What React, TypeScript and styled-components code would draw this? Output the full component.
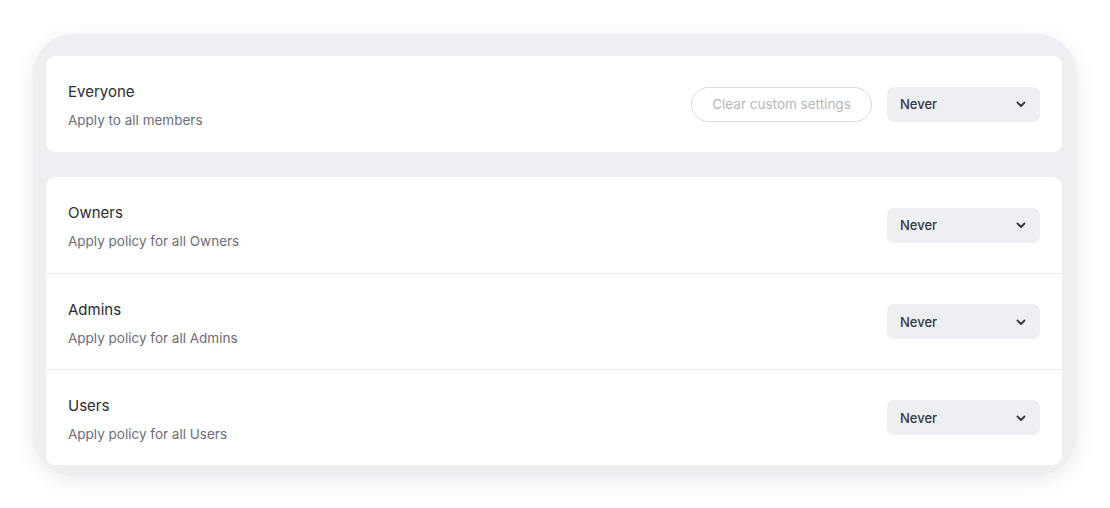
import React from "react";
import styled, { createGlobalStyle } from "styled-components";

const GlobalStyle = createGlobalStyle`
  html, body { margin: 0; padding: 0; background: #ffffff; }
  body { font-family: Inter, "Noto Sans", "Liberation Sans", sans-serif; -webkit-font-smoothing: antialiased; }
  * { box-sizing: border-box; }
`;

const Page = styled.div`
  width: 1110px;
  height: 508px;
  padding: 34px 34px 0 34px;
`;

const Panel = styled.div`
  width: 1042px;
  height: 440px;
  background: #eeeff3;
  border-radius: 40px;
  box-shadow: 0 6px 22px rgba(20, 20, 40, 0.09), 0 1px 4px rgba(20, 20, 40, 0.04);
  padding: 22px 14px 0 12px;
  display: flex;
  flex-direction: column;
  gap: 25px;
`;

const Card = styled.div`
  background: #ffffff;
  border-radius: 9px;
  display: flex;
  flex-direction: column;
`;

const Row = styled.div<{ $divider?: boolean }>`
  height: 96px;
  display: flex;
  align-items: center;
  justify-content: space-between;
  padding: 0 22px;
  border-top: ${(p) => (p.$divider ? "1px solid #ececf0" : "none")};
`;

const TextBlock = styled.div`
  display: flex;
  flex-direction: column;
  gap: 9px;
  margin-top: 3px;
`;

const Title = styled.div`
  font-size: 15px;
  line-height: 20px;
  font-weight: 400;
  color: #2b2b33;
`;

const Subtitle = styled.div`
  font-size: 13.5px;
  line-height: 18px;
  color: #6c6d78;
`;

const Controls = styled.div`
  display: flex;
  align-items: center;
  gap: 15px;
`;

const ClearButton = styled.button`
  height: 35px;
  width: 181px;
  border: 1px solid #d9dae0;
  border-radius: 18px;
  background: #ffffff;
  color: #b6b7c0;
  font-family: inherit;
  font-size: 13.5px;
  padding: 0;
  cursor: pointer;
`;

const Select = styled.div`
  width: 153px;
  height: 35px;
  background: #eeeff3;
  border-radius: 7px;
  display: flex;
  align-items: center;
  justify-content: space-between;
  padding: 0 13px 0 13px;
  font-size: 13px;
  font-weight: 500;
  color: #35353e;
`;

const Chevron = () => (
  <svg width="12" height="12" viewBox="0 0 12 12" fill="none">
    <path d="M2.5 4.5 L6 8 L9.5 4.5" stroke="#35353e" strokeWidth="1.8" strokeLinecap="round" strokeLinejoin="round" />
  </svg>
);

const Dropdown = () => (
  <Select>
    <span>Never</span>
    <Chevron />
  </Select>
);

const groups = [
  { title: "Owners", sub: "Apply policy for all Owners" },
  { title: "Admins", sub: "Apply policy for all Admins" },
  { title: "Users", sub: "Apply policy for all Users" },
];

export default function App() {
  return (
    <>
      <GlobalStyle />
      <Page>
        <Panel>
          <Card>
            <Row>
              <TextBlock>
                <Title>Everyone</Title>
                <Subtitle>Apply to all members</Subtitle>
              </TextBlock>
              <Controls>
                <ClearButton>Clear custom settings</ClearButton>
                <Dropdown />
              </Controls>
            </Row>
          </Card>
          <Card>
            {groups.map((g, i) => (
              <Row key={g.title} $divider={i > 0}>
                <TextBlock>
                  <Title>{g.title}</Title>
                  <Subtitle>{g.sub}</Subtitle>
                </TextBlock>
                <Controls>
                  <Dropdown />
                </Controls>
              </Row>
            ))}
          </Card>
        </Panel>
      </Page>
    </>
  );
}
